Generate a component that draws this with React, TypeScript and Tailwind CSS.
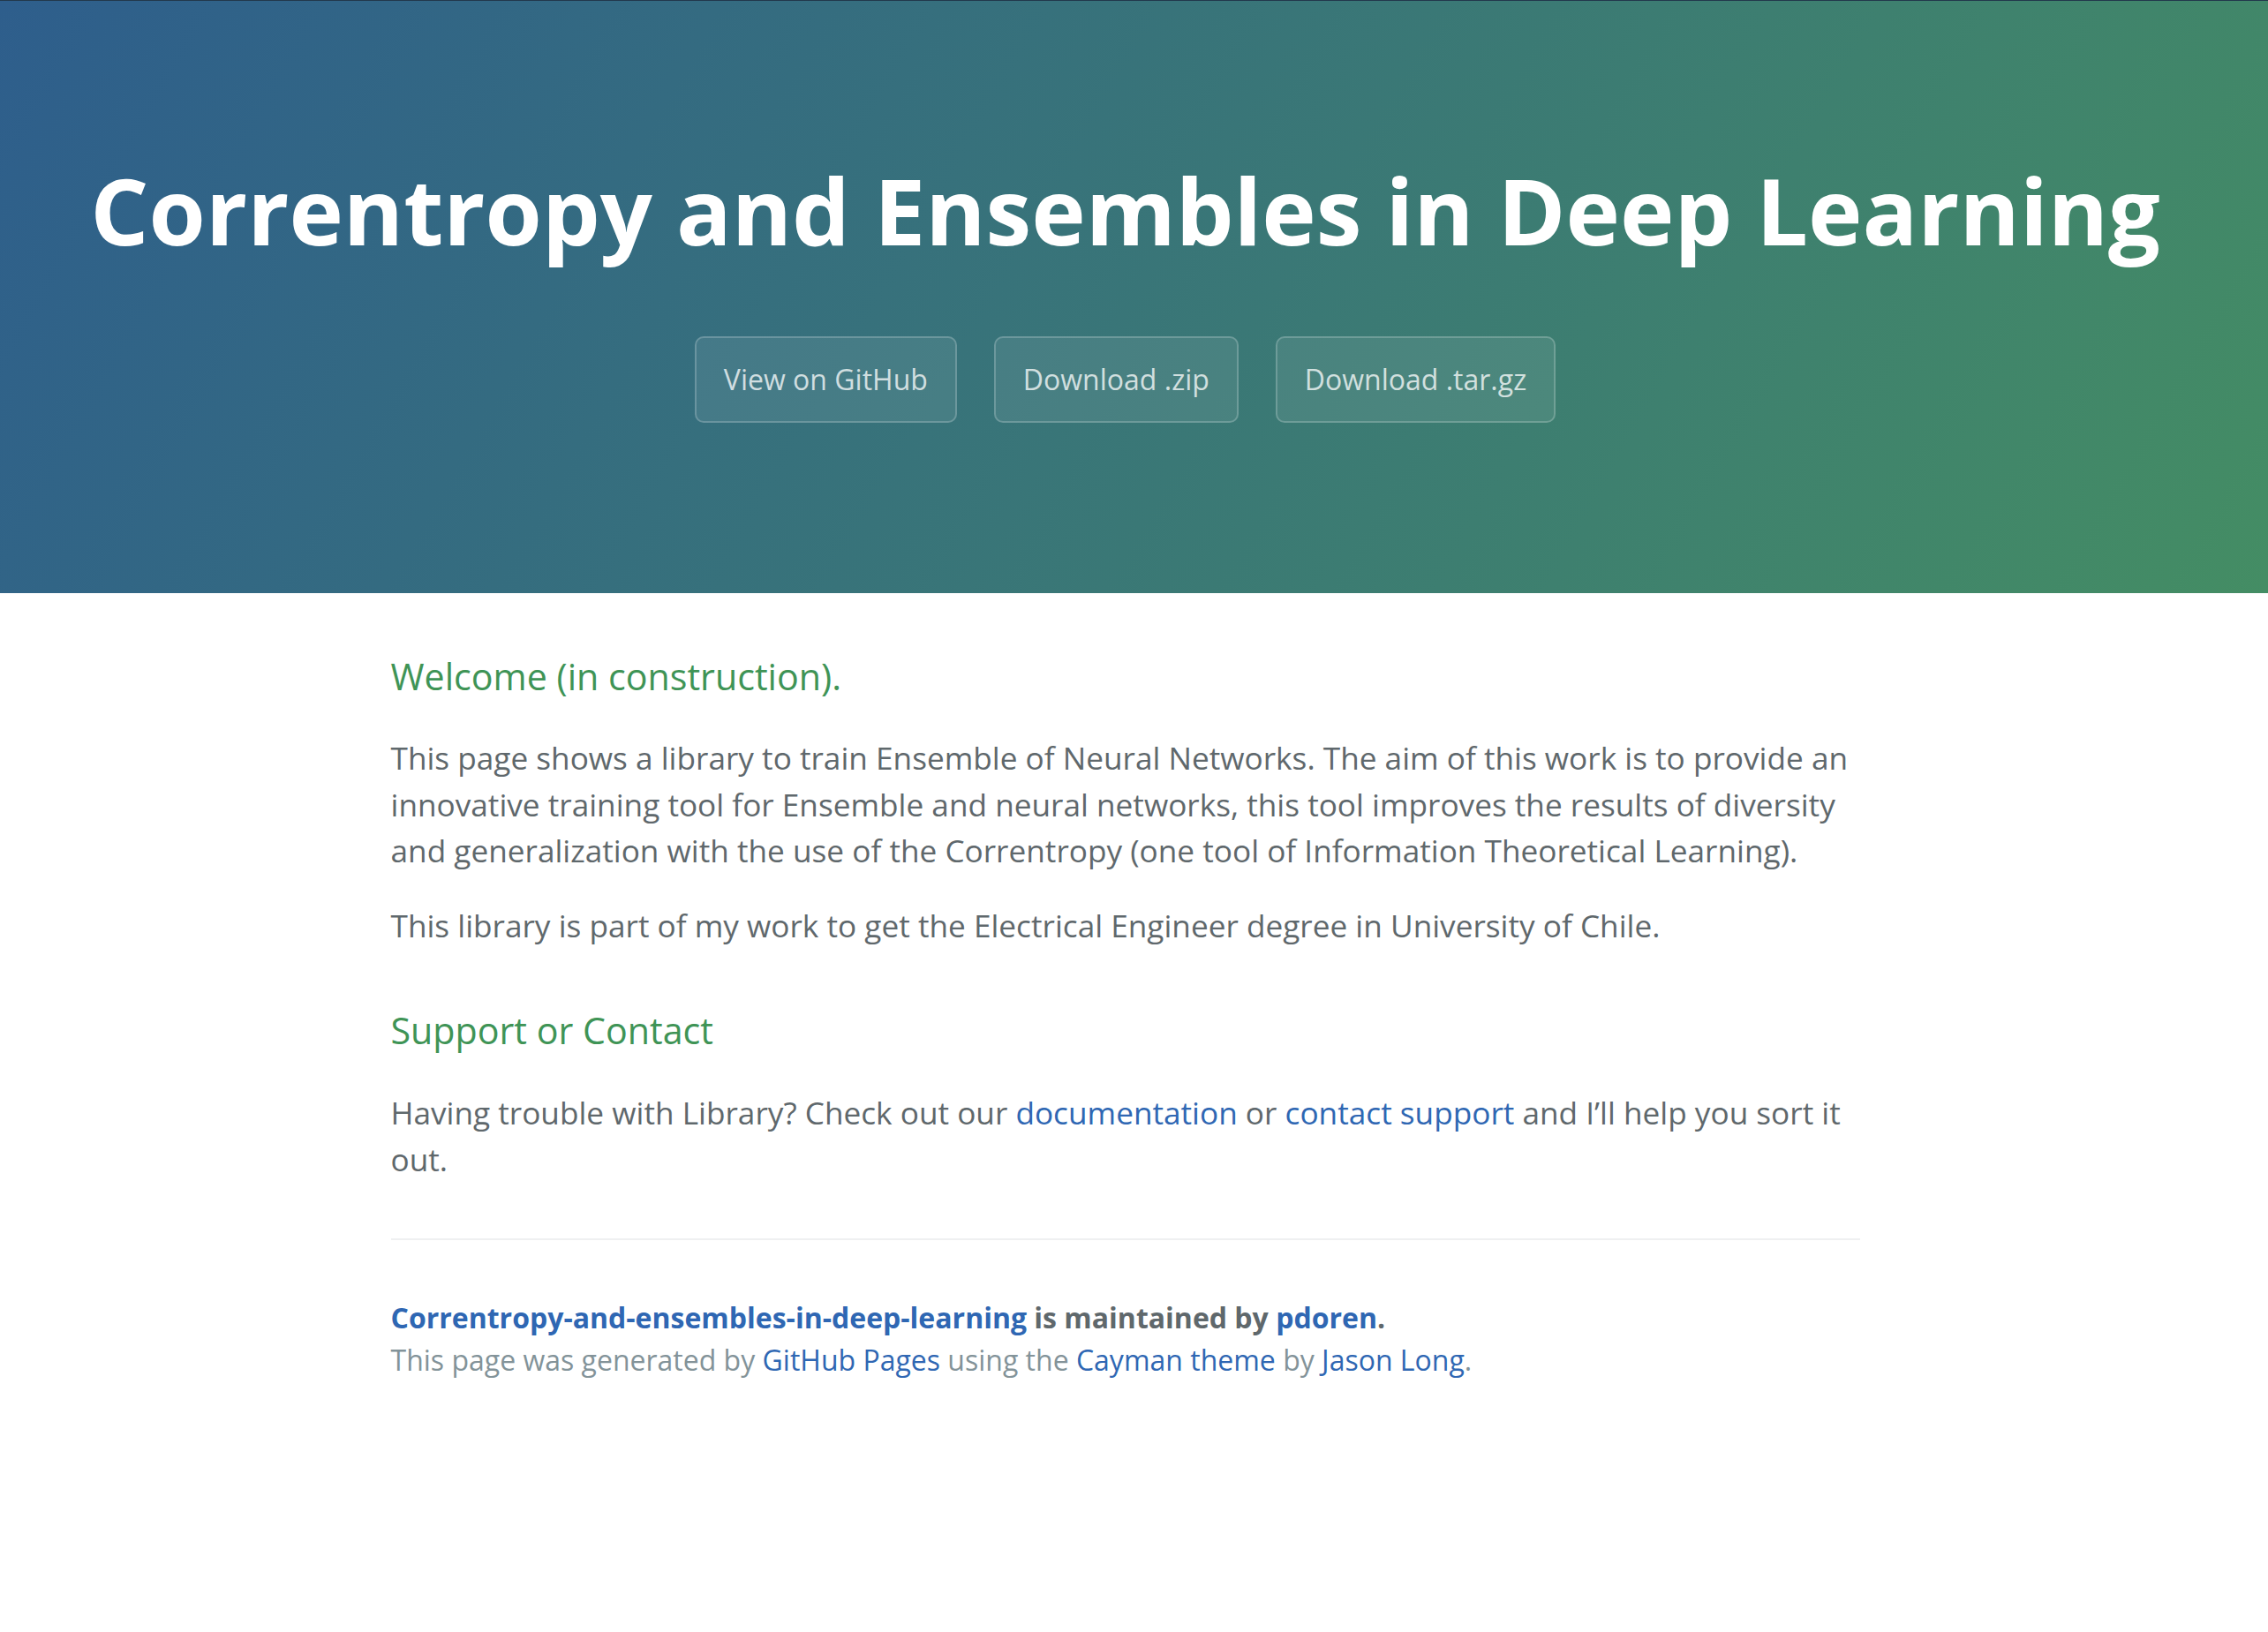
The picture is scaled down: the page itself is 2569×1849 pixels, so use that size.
import React from 'react';

const buttons = ['View on GitHub', 'Download .zip', 'Download .tar.gz'];

const Header: React.FC = () => {
  return (
    <header className="border-t border-[#22384c] bg-[linear-gradient(120deg,#2e5e8c,#448d64)] pr-[20px] pt-[159px] pb-[193px] text-center">
      <h1 className="text-[104px] font-bold leading-[156px] text-white">
        Correntropy and Ensembles in Deep Learning
      </h1>
      <div className="mt-[65px] flex justify-center gap-[42px]">
        {buttons.map((label) => (
          <a
            key={label}
            href="#"
            className="rounded-[10px] border-2 border-white/20 bg-white/[0.08] px-[31px] py-[23px] text-[32px] leading-[48px] text-white/75"
          >
            {label}
          </a>
        ))}
      </div>
    </header>
  );
};

const App: React.FC = () => {
  return (
    <div className="min-h-screen bg-white font-['Open_Sans',sans-serif]">
      <Header />
      <div className="pr-[20px]">
        <main className="mx-auto max-w-[2048px] px-[192px] pt-[64px] pb-[64px] text-[35.2px] leading-[52.8px] text-[#5f686c]">
          <h3 className="mb-[34px] text-[41.2px] font-normal leading-[61.8px] text-[#3f9456]">
            Welcome (in construction).
          </h3>
          <p className="mb-[32px]">
            This page shows a library to train Ensemble of Neural Networks. The aim of this work is to provide an
            innovative training tool for Ensemble and neural networks, this tool improves the results of diversity
            and generalization with the use of the Correntropy (one tool of Information Theoretical Learning).
          </p>
          <p className="mb-[32px]">
            This library is part of my work to get the Electrical Engineer degree in University of Chile.
          </p>
          <h3 className="mt-[62px] mb-[35px] text-[41.2px] font-normal leading-[61.8px] text-[#3f9456]">
            Support or Contact
          </h3>
          <p>
            Having trouble with Library? Check out our{' '}
            <a href="#" className="text-[#2f67b3]">documentation</a> or{' '}
            <a href="#" className="text-[#2f67b3]">contact support</a> and I’ll help you sort it out.
          </p>
          <footer className="mt-[64px] border-t-2 border-[#eff0f1] pt-[64px] text-[32px] leading-[48px]">
            <span className="block font-bold">
              <a href="#" className="text-[#2f67b3]">Correntropy-and-ensembles-in-deep-learning</a> is maintained by{' '}
              <a href="#" className="text-[#2f67b3]">pdoren</a>.
            </span>
            <span className="block text-[#839399]">
              This page was generated by <a href="#" className="text-[#2f67b3]">GitHub Pages</a> using the{' '}
              <a href="#" className="text-[#2f67b3]">Cayman theme</a> by{' '}
              <a href="#" className="text-[#2f67b3]">Jason Long</a>.
            </span>
          </footer>
        </main>
      </div>
    </div>
  );
};

export default App;
